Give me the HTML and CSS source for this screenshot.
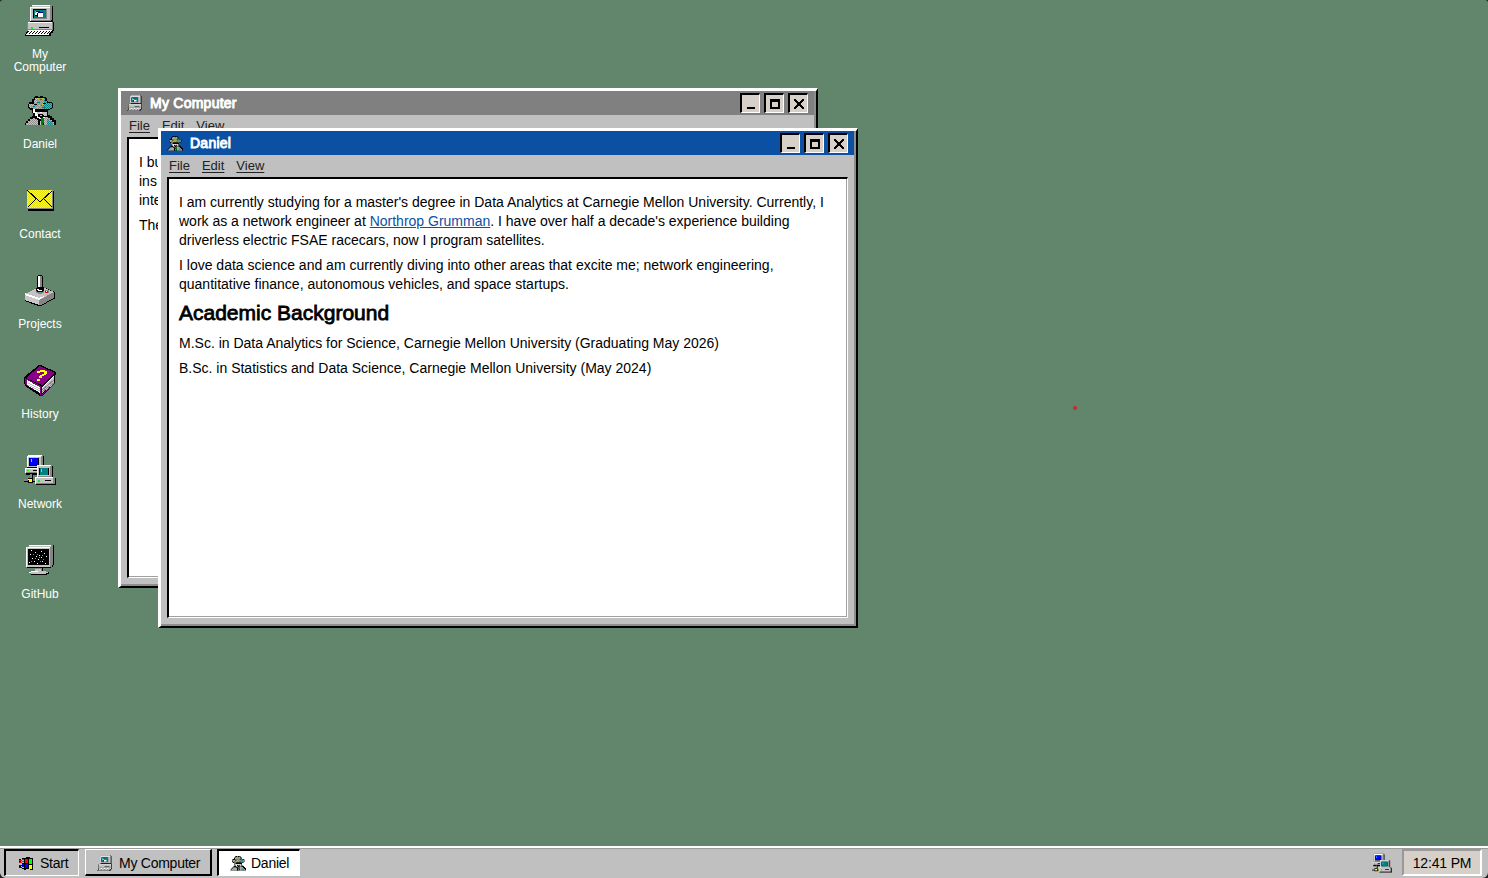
FILE: index.html
```html
<!DOCTYPE html>
<html lang="en">
<head>
<meta charset="utf-8">
<title>Desktop</title>
<link rel="stylesheet" href="styles.css">
</head>
<body>
<svg class="sprites" width="0" height="0" aria-hidden="true">
  <defs>
    <pattern id="dy" width="2" height="2" patternUnits="userSpaceOnUse"><path fill="#ff0" d="M0 0h2v2H0z"/><path fill="#e4e010" d="M0 0h1v1H0zM1 1h1v1H1z"/></pattern>
    <pattern id="dg" width="2" height="2" patternUnits="userSpaceOnUse"><path fill="#c3c3c3" d="M0 0h2v2H0z"/><path fill="#909090" d="M0 0h1v1H0zM1 1h1v1H1z"/></pattern>
    <pattern id="dh" width="2" height="2" patternUnits="userSpaceOnUse"><path fill="#b4b040" d="M0 0h2v2H0z"/><path fill="#8c9488" d="M0 0h1v1H0zM1 1h1v1H1z"/></pattern>
    <pattern id="dt" width="2" height="2" patternUnits="userSpaceOnUse"><path fill="#939393" d="M0 0h2v2H0z"/><path fill="#108888" d="M0 0h1v1H0zM1 1h1v1H1z"/></pattern>
    <symbol id="computer" viewBox="0 0 32 32">
      <path fill="#000" d="M8 1h20v1h1v16h1v9h-1v2h-2v3H1v-2h1v-2h1v-9h3V3h1V2h1z"/>
      <path fill="#858585" d="M8 1h20v15h-1v1H6V3h1V2h1zM3 18h26v8h-1v1H3z"/>
      <path fill="#c3c3c3" d="M8 2h18v14H7V3h1zM4 19h24v6H4z"/>
      <path fill="#fff" d="M8 1h18v1H8zM6 3h20v1H7v13H6zM4 18h24v1H4z"/>
      <path fill="#858585" d="M9 5h14v10H9z"/><path fill="#000" d="M9 5h13v9H9z"/>
      <path fill="#008080" d="M10 6h12v8H10z"/>
      <path fill="#fff" d="M11 7h4v4h-4zM14 9h5v4h-5z"/><path fill="#000080" d="M12 7h4v1h-4zM14 8h5v1h-5z"/><path fill="#000" d="M13 9h1v4h-1zM11 11h2v1h-2z"/><path fill="#00e5f5" d="M11 7h1v2h-1z"/>
      <path fill="#000" d="M15 23h10v1H15zM8 17h17v1H8z"/><path fill="#0f0" d="M7 23h2v2H7z"/>
      <path fill="#fff" d="M4 26h24v1h-1v1h-1v1h-1v2H2v-1h1v-1h1z"/>
      <path fill="#000" d="M4 27h1v1H4zM7 27h1v1H7zM10 27h1v1h-1zM13 27h1v1h-1zM16 27h1v1h-1zM19 27h1v1h-1zM22 27h1v1h-1zM25 27h1v1h-1zM6 28h1v1H6zM9 28h1v1H9zM12 28h1v1h-1zM15 28h1v1h-1zM18 28h1v1h-1zM21 28h1v1h-1zM24 28h1v1h-1zM5 29h1v1H5zM8 29h1v1H8zM11 29h1v1h-1zM14 29h1v1h-1zM17 29h1v1h-1zM20 29h1v1h-1zM23 29h1v1h-1z"/>
    </symbol>
    <symbol id="spy" viewBox="0 0 32 32">
      <path fill="#000" d="M11 2h3v1h2V2h3v1h3v1h1v3h1v1h4v1h1v5h-1v1h-2v1h-2v5h2v1h2v2h2v2h2v2h1v3H1v-2h1v-2h2v-2h2v-2h2v-1h1v-3H8v-3H6v-1H5v-1H4v-4h1V8h3V5h2z"/>
      <path fill="url(#dg)" d="M11 4h3v5h-4V6h1zM5 10h5v4H6v-1H5zM2 31v-2h2v-2h2v-2h3v-1h2v1h2v1h1v5zM20 31v-8h4v1h2v2h2v2h2v3z"/>
      <path fill="url(#dh)" d="M14 4h6v5h-7V5h1zM10 9h13v6H9v-1H7v-2h3z"/>
      <path fill="url(#dt)" d="M20 4h1v3h2v2h5v5h-2v1h-7v-3h-2v-2h3zM23 25h2v2h3v2h1v2h-6z"/>
      <path fill="#c8c81e" d="M14 4h1v2h-1zM18 4h2v1h-2zM14 11h2v1h-2zM18 10h2v1h-2zM12 13h2v1h-2z"/>
      <path fill="#008080" d="M16 5h2v1h-2zM13 8h3v1h-3zM9 12h2v1H9zM18 13h3v1h-3z"/>
      <path fill="#000" d="M9 9h1v1H9zM10 10h3v1h-3zM19 9h3v1h-3zM13 15h9v1h-9z"/>
      <path fill="#c3c3c3" d="M12 18h11v4H12z"/>
      <path fill="#fff" d="M9 15h2v3h2v2h1v3h2v1h3v-1h2v1h-1v1h-5v-1h-2v-2h-2v-3H9zM16 18h2v1h-2z"/>
      <path fill="#000" d="M11 16h11v2h-4v-1h-1v1h-4v-1h-2zM14 20h5v1h1v1h-2v-1h-2v1h-2zM14 25h2v6h-2z"/>
      <path fill="#008000" d="M17 24h3v5h-1v2h-2z"/>
      <path fill="#c3c3c3" d="M16 27h1v4h-1z"/>
    </symbol>
    <symbol id="mail" viewBox="0 0 32 32">
      <path fill="#000" d="M4 7h26v20H4z"/><path fill="#858585" d="M3 6h26v19H3z"/><path fill="url(#dy)" d="M3 6h25v18H3z"/>
      <path fill="none" stroke="#000" d="M3.500 6.500l12 11h1l12-11M3.500 23.500l8-8M28.500 23.500l-8-8"/>
    </symbol>
    <symbol id="joystick" viewBox="0 0 32 32">
      <path fill="#000" d="M17 12l14 6v6l-1 1-13 7h-3L1 27v-7z"/>
      <path fill="#c3c3c3" d="M15 13h3l12 5-13 7h-2L1 20z"/>
      <path fill="#c8c8c8" d="M1 20l14 6v5L1 26z"/><path fill="#858585" d="M15 26l15-8v6l-13 7h-2z"/><path fill="#fff" d="M1 19l14 5 5-2v1l-5 3L1 21z"/>
      <path fill="#858585" d="M12 16h2v1h4v-1h2v3h-2v1h-4v-1h-2z"/>
      <path fill="#000" d="M14 1h4v1h1v12h1v3h-1v1h-6v-1h-1v-3h1V2h1z"/><path fill="#858585" d="M14 2h4v11h-4z"/><path fill="#fff" d="M14 2h2v11h-2zM13 15h2v1h3v1h-4v-1h-1z"/>
      <path fill="#858585" d="M21 16h4v3h-4z"/><path fill="red" d="M21 17h3v2h-3z"/><path fill="#fff" d="M22 17h1v1h-1z"/>
    </symbol>
    <symbol id="book" viewBox="0 0 32 32">
      <path fill="#000" d="M15 1h2l15 7v3h-1v9L18 32h-2L1 22v-2H0v-7z"/>
      <path fill="#808" d="M16 2l15 7-13 12L2 14z"/><path fill="#808" d="M1 14l16 8v9h-1v-2L2 21v-1H1z"/>
      <path fill="#fff" d="M3 16l13 7v6L3 21z"/><path fill="#c3c3c3" d="M18 23l12-11v8L18 29z"/><path fill="#fff" d="M18 23l12-11v1L18 24z"/>
      <path fill="none" stroke="#c3c3c3" d="M4 19l12 6M4 21l12 6"/><path fill="none" stroke="#858585" d="M18 26l12-10M18 28l12-9"/>
      <path fill="#808" d="M18 30l13-11v1L18 31z"/>
      <path fill="#ff0" d="M16 6h5v1h2v3h-1v1h-2v1h-2v2h-3v-2h1v-1h2v-1h2V8h-4v1h-3V7h3zM13 15h3v2h-3z"/>
    </symbol>
    <symbol id="network" viewBox="0 0 32 32">
      <path fill="#000" d="M4 1h15v1h1v12h-2v5h-2v2H2v-6h2v-1H3V2h1z"/>
      <path fill="#858585" d="M3 2h1V1h15v12H3zM1 14h13v5H1z"/>
      <path fill="#c3c3c3" d="M4 2h13v11H4zM2 15h12v3H2z"/><path fill="#fff" d="M3 2h14v1H4v10H3zM1 14h15v1H2v4H1zM4 1h14v1H4z"/>
      <path fill="#000" d="M5 4h10v8H5zM9 16h4v1H9z"/><path fill="#00f" d="M6 4h8v7H6z"/><path fill="#0ff" d="M7 5h1v3H7z"/><path fill="#0f0" d="M3 16h2v1H3z"/>
      <path fill="#858585" d="M6 20h2v5H6zM0 25h13v2H0z"/><path fill="#000" d="M8 20h1v5H8zM0 27h13v1H0zM4 24h5v5H4z"/><path fill="#ff0" d="M5 25h3v3H5z"/><path fill="#fff" d="M4 25h1v1H4z"/>
      <path fill="#000" d="M13 11h15v1h1v11h2v1h1v7H12v-7h1z"/>
      <path fill="#858585" d="M13 11h15v12H13zM11 23h20v7H11z"/>
      <path fill="#c3c3c3" d="M14 12h12v10H14zM12 24h17v5H12z"/><path fill="#fff" d="M13 11h14v1H14v11h-1zM11 23h18v1H12v6h-1z"/>
      <path fill="#000" d="M15 14h10v7H15zM21 26h6v1h-6z"/><path fill="#008080" d="M16 14h8v7h-8z"/><path fill="#0ff" d="M17 15h1v3h-1z"/><path fill="#0f0" d="M14 26h2v2h-2z"/>
    </symbol>
    <symbol id="terminal" viewBox="0 0 32 32">
      <path fill="#000" d="M4 1h26v20h-1v2h-2v1H3V3h1z"/><path fill="#858585" d="M4 1h25v20h-1v2H2V3h2z"/>
      <path fill="#c3c3c3" d="M5 1h22v2h-1v20H3V3h2z"/><path fill="#fff" d="M5 1h22v1H5zM2 3h24v1H3v19H2z"/>
      <path fill="#000" d="M4 5h21v16H4zM11 24h8v4h-8zM7 28h18v2h-2v1H7z"/><path fill="#858585" d="M11 24h7v3h-7z"/><path fill="#c3c3c3" d="M11 25h6v2h5v1h2v1h-2v1H7v-1H5v-1h2v-1h4z"/><path fill="#fff" d="M7 27h7v1H7zM5 28h2v1H5z"/>
      <path fill="#fff" d="M7 6h1v1H7zM17 7h1v1h-1zM11 8h1v1h-1zM6 10h1v1H6zM20 9h1v1h-1zM15 11h1v1h-1zM12 12h1v1h-1zM17 13h1v1h-1zM22 12h1v1h-1zM8 14h1v1H8zM14 15h1v1h-1zM5 18h1v1H5zM10 17h1v1h-1zM18 17h1v1h-1zM21 19h1v1h-1zM13 19h1v1h-1z"/>
      <path fill="#858585" d="M9 10h1v1H9zM13 10h1v1h-1zM18 11h1v1h-1zM11 14h1v1h-1zM15 13h1v1h-1zM19 15h1v1h-1zM16 17h1v1h-1zM7 17h1v1H7z"/>
    </symbol>
    <symbol id="flag" viewBox="0 0 16 16">
      <path fill="#000" d="M8 2h4v1h3v12h-3v-1H8v1H6V3h2z"/>
      <path fill="red" d="M7 4h3v4H7zM4 4h2v1H4zM1 5h3v1H1zM4 6h2v1H4zM1 7h3v1H1z"/><path fill="#0f0" d="M11 4h3v5h-3z"/><path fill="#00f" d="M7 9h3v4H7zM4 9h2v1H4zM1 10h3v1H1zM4 11h2v1H4zM1 12h3v1H1z"/><path fill="#ff0" d="M11 10h3v4h-3z"/>
      <path fill="#000" d="M4 3h2v1H4zM1 4h2v1H1zM1 6h2v1H1zM4 8h2v1H4zM4 10h2v1H4zM1 11h2v1H1zM4 13h2v1H4z"/>
    </symbol>
  </defs>
</svg>

<div class="screen">
  <main class="desktop">
    <nav class="shortcuts">
      <a class="shortcut"><svg class="icon"><use href="#computer"/></svg><span>My<br>Computer</span></a>
      <a class="shortcut"><svg class="icon"><use href="#spy"/></svg><span>Daniel</span></a>
      <a class="shortcut"><svg class="icon"><use href="#mail"/></svg><span>Contact</span></a>
      <a class="shortcut"><svg class="icon"><use href="#joystick"/></svg><span>Projects</span></a>
      <a class="shortcut"><svg class="icon"><use href="#book"/></svg><span>History</span></a>
      <a class="shortcut"><svg class="icon"><use href="#network"/></svg><span>Network</span></a>
      <a class="shortcut"><svg class="icon"><use href="#terminal"/></svg><span>GitHub</span></a>
    </nav>

    <section class="window window-computer">
      <header class="titlebar">
        <svg class="icon-small"><use href="#computer"/></svg><h1>My Computer</h1>
        <button class="control"><svg viewBox="0 0 17 17"><path d="M5 12h8v2H5z"/></svg></button>
        <button class="control"><svg viewBox="0 0 17 17"><path fill-rule="evenodd" d="M4 4h10v10H4zM6 7v5h6V7z"/></svg></button>
        <button class="control"><svg viewBox="0 0 17 17"><path d="M4 4h2v1H4zM12 4h2v1h-2zM4 5h3v1H4zM11 5h3v1h-3zM5 6h3v1H5zM10 6h3v1h-3zM6 7h6v1H6zM7 8h4v2H7zM6 10h6v1H6zM5 11h3v1H5zM10 11h3v1h-3zM4 12h3v1H4zM11 12h3v1h-3zM4 13h2v1H4zM12 13h2v1h-2z"/></svg></button>
      </header>
      <div class="menu"><span>File</span><span>Edit</span><span>View</span></div>
      <article class="content"><p>I bu<br>ins<br>inte</p><p>The</p></article>
    </section>

    <section class="window window-daniel">
      <header class="titlebar">
        <svg class="icon-small"><use href="#spy"/></svg><h1>Daniel</h1>
        <button class="control"><svg viewBox="0 0 17 17"><path d="M5 12h8v2H5z"/></svg></button>
        <button class="control"><svg viewBox="0 0 17 17"><path fill-rule="evenodd" d="M4 4h10v10H4zM6 7v5h6V7z"/></svg></button>
        <button class="control"><svg viewBox="0 0 17 17"><path d="M4 4h2v1H4zM12 4h2v1h-2zM4 5h3v1H4zM11 5h3v1h-3zM5 6h3v1H5zM10 6h3v1h-3zM6 7h6v1H6zM7 8h4v2H7zM6 10h6v1H6zM5 11h3v1H5zM10 11h3v1h-3zM4 12h3v1H4zM11 12h3v1h-3zM4 13h2v1H4zM12 13h2v1h-2z"/></svg></button>
      </header>
      <div class="menu"><span>File</span><span>Edit</span><span>View</span></div>
      <article class="content">
        <p>I am currently studying for a master's degree in Data Analytics at Carnegie Mellon University. Currently, I<br>work as a network engineer at <a class="link">Northrop Grumman</a>. I have over half a decade's experience building<br>driverless electric FSAE racecars, now I program satellites.</p>
        <p>I love data science and am currently diving into other areas that excite me; network engineering,<br>quantitative finance, autonomous vehicles, and space startups.</p>
        <h2>Academic Background</h2>
        <p>M.Sc. in Data Analytics for Science, Carnegie Mellon University (Graduating May 2026)</p>
        <p>B.Sc. in Statistics and Data Science, Carnegie Mellon University (May 2024)</p>
      </article>
    </section>
    <i class="pointer-dot"></i>
  </main>

  <footer class="taskbar">
    <button class="task start"><svg class="icon-small flag"><use href="#flag"/></svg>Start</button>
    <button class="task raised"><svg class="icon-small"><use href="#computer"/></svg>My Computer</button>
    <button class="task active"><svg class="icon-small"><use href="#spy"/></svg>Daniel</button>
    <svg class="tray"><use href="#network"/></svg>
    <time class="clock">12:41 PM</time>
  </footer>
</div>
</body>
</html>
```
FILE: styles.css
```css
* { box-sizing: border-box; }
body { margin: 0; background: #222; font: 13.33px/19px "Liberation Sans", Arial, sans-serif; color: #000; overflow: hidden; }
svg { shape-rendering: crispEdges; display: block; flex: none; }
.sprites { position: absolute; shape-rendering: inherit; }
.screen { height: 878px; display: flex; flex-direction: column; background: #62866c; border-radius: 3px 3px 6px 6px; overflow: hidden; }
.desktop { flex: 1; position: relative; }

.shortcuts { width: 80px; display: flex; flex-direction: column; }
.shortcut { height: 90px; padding-top: 4px; display: flex; flex-direction: column; align-items: center; gap: 12px; font-size: 12px; line-height: 13px; color: #fff; text-align: center; }
.icon { width: 32px; height: 32px; }
.icon-small { width: 16px; height: 16px; }
.icon-small, .tray { shape-rendering: geometricPrecision; }
.flag { shape-rendering: crispEdges; }

.window { position: absolute; width: 700px; height: 500px; padding: 0 2px 2px 0; border: solid; border-width: 3px 2px 2px 3px; border-color: #fff #000 #000 #fff; background: #c0c0c0; box-shadow: inset -2px -2px #8e8e8e; display: flex; flex-direction: column; }
.window-computer { left: 118px; top: 88px; }
.window-daniel { left: 158px; top: 128px; }
.titlebar { height: 24px; flex: none; padding: 0 6px 0 6px; display: flex; align-items: center; gap: 4px; background: #0c50a4; color: #fff; }
.window-computer .titlebar { background: #808080; }
.titlebar h1 { flex: 1; margin: 0 0 0 3px; font-size: 14px; font-weight: 400; line-height: 20px; letter-spacing: .25px; -webkit-text-stroke: .9px #fff; }
.control { width: 20px; height: 20px; padding: 0; border: solid; border-width: 2px 1px 1px 2px; border-color: #000 #fff #fff #000; background: #d6d0c8; }
.control svg { width: 17px; height: 17px; }
.menu { height: 22px; flex: none; padding: 1px 8px; display: flex; gap: 12px; font-size: 13px; color: #222; text-decoration: underline; text-underline-offset: 2px; text-decoration-thickness: 1px; }
.content { flex: 1; margin: 0 6px 6px; padding: 14px 10px; border: solid; border-width: 2px 1px 1px 2px; border-color: #000 #fff #fff #000; background: #fff; box-shadow: inset -1px -1px #a0a0a0; font-size: 14px; white-space: nowrap; }
.content p { margin: 0 0 6px; }
.content h2 { margin: -1px 0 8px; font-size: 21px; font-weight: 400; line-height: 27px; -webkit-text-stroke: .8px #000; }
.link { color: #0c50a4; text-decoration: underline; }
.pointer-dot { position: absolute; left: 1073px; top: 406px; width: 4px; height: 4px; border-radius: 50%; background: #d3262e; }

.taskbar { height: 32px; flex: none; padding: 1px 6px 2px 4px; border-top: 2px solid #fff; background: #c0c0c0; box-shadow: inset 0 1px #9a9a9a; display: flex; align-items: stretch; }
.task { padding: 0 0 0 12px; border: solid; border-width: 2px 1px 1px 2px; border-color: #000 #fff #fff #000; background: #c0c0c0; font: inherit; font-size: 14px; letter-spacing: -.25px; color: #000; white-space: nowrap; display: flex; align-items: center; gap: 6px; }
.start { width: 75px; margin-right: 6px; }
.raised { width: 127px; margin-right: 5px; padding: 2px 0 0 11px; border-width: 1px 2px 2px 1px; border-color: #fff #000 #000 #fff; }
.active { width: 83px; padding-left: 11px; gap: 5px; background: #fff; }
.tray { width: 20px; height: 20px; margin: 4px 10px 0 auto; }
.clock { width: 80px; padding-top: 1px; border: 2px solid; border-color: #999 #fff #fff #999; background: #d6d0c8; display: grid; place-items: center; font-size: 14px; letter-spacing: -.15px; white-space: nowrap; }
```
